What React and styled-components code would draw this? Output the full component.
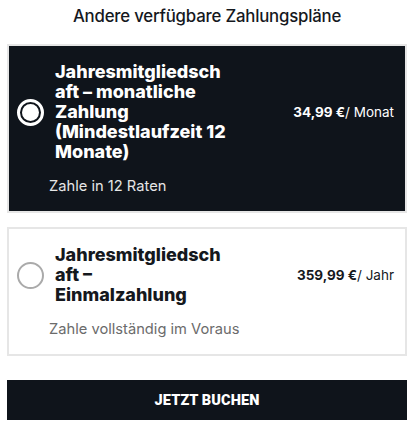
import React from 'react';
import styled, {createGlobalStyle} from 'styled-components';

const GlobalStyle = createGlobalStyle`
  body {
    margin: 0;
    background: #fff;
    font-family: Inter, "Open Sans", "Liberation Sans", sans-serif;
  }
`;

const plans = [
  {
    id: 'monthly',
    title: 'Jahresmitgliedschaft – monatliche Zahlung (Mindestlaufzeit 12 Monate)',
    price: '34,99 €',
    unit: '/ Monat',
    note: 'Zahle in 12 Raten',
  },
  {
    id: 'once',
    title: 'Jahresmitgliedschaft – Einmalzahlung',
    price: '359,99 €',
    unit: '/ Jahr',
    note: 'Zahle vollständig im Voraus',
  },
];

export default function App() {
  const [selected, setSelected] = React.useState('monthly');

  return (
    <Page>
      <GlobalStyle />
      <Heading>Andere verfügbare Zahlungspläne</Heading>
      <PlanList>
        {plans.map((plan) => {
          const active = plan.id === selected;
          return (
            <Card key={plan.id} $active={active} onClick={() => setSelected(plan.id)}>
              <Row>
                <Radio $active={active} />
                <Title>{plan.title}</Title>
                <Price>
                  <strong>{plan.price}</strong>{plan.unit}
                </Price>
              </Row>
              <Note $active={active}>{plan.note}</Note>
            </Card>
          );
        })}
      </PlanList>
      <BookButton>JETZT BUCHEN</BookButton>
    </Page>
  );
}

const Page = styled.div`
  padding: 0 7px;
  display: flex;
  flex-direction: column;
`;

const Heading = styled.h2`
  margin: 0;
  height: 44px;
  padding-top: 6px;
  box-sizing: border-box;
  text-align: center;
  font-size: 16.8px;
  font-weight: 500;
  color: #15181d;
  letter-spacing: -0.2px;
`;

const PlanList = styled.div`
  display: flex;
  flex-direction: column;
  gap: 14px;
`;

const Card = styled.div`
  border: 2px solid #e6e6e6;
  background: ${({$active}) => ($active ? '#0f141b' : '#fff')};
  color: ${({$active}) => ($active ? '#fff' : '#15181d')};
  padding: 16px 11px 15px 8px;
  cursor: pointer;
`;

const Row = styled.div`
  display: flex;
  align-items: center;
`;

const Radio = styled.span`
  flex: none;
  width: 27px;
  height: 27px;
  box-sizing: border-box;
  border-radius: 50%;
  border: ${({$active}) => ($active ? '3px solid #fff' : '2px solid #aaa')};
  margin-right: 11px;
  position: relative;
  &::after {
    content: '';
    display: ${({$active}) => ($active ? 'block' : 'none')};
    position: absolute;
    inset: 2px;
    border-radius: 50%;
    background: #fff;
  }
`;

const Title = styled.div`
  width: 172px;
  font-size: 18px;
  font-weight: 800;
  line-height: 20px;
  overflow-wrap: anywhere;
`;

const Price = styled.div`
  margin-left: auto;
  font-size: 13.5px;
  font-weight: 400;
  white-space: nowrap;
  strong {
    font-weight: 700;
  }
`;

const Note = styled.div`
  margin: 14px 0 0 32px;
  font-size: 14.7px;
  line-height: 20px;
  color: ${({$active}) => ($active ? '#e6e6e6' : '#6b6b6b')};
`;

const BookButton = styled.button`
  margin-top: 24px;
  height: 40px;
  border: none;
  background: #0f141b;
  color: #fff;
  font-family: Roboto, "Liberation Sans", sans-serif;
  font-size: 14.5px;
  font-weight: 900;
  letter-spacing: 0.1px;
  cursor: pointer;
`;
